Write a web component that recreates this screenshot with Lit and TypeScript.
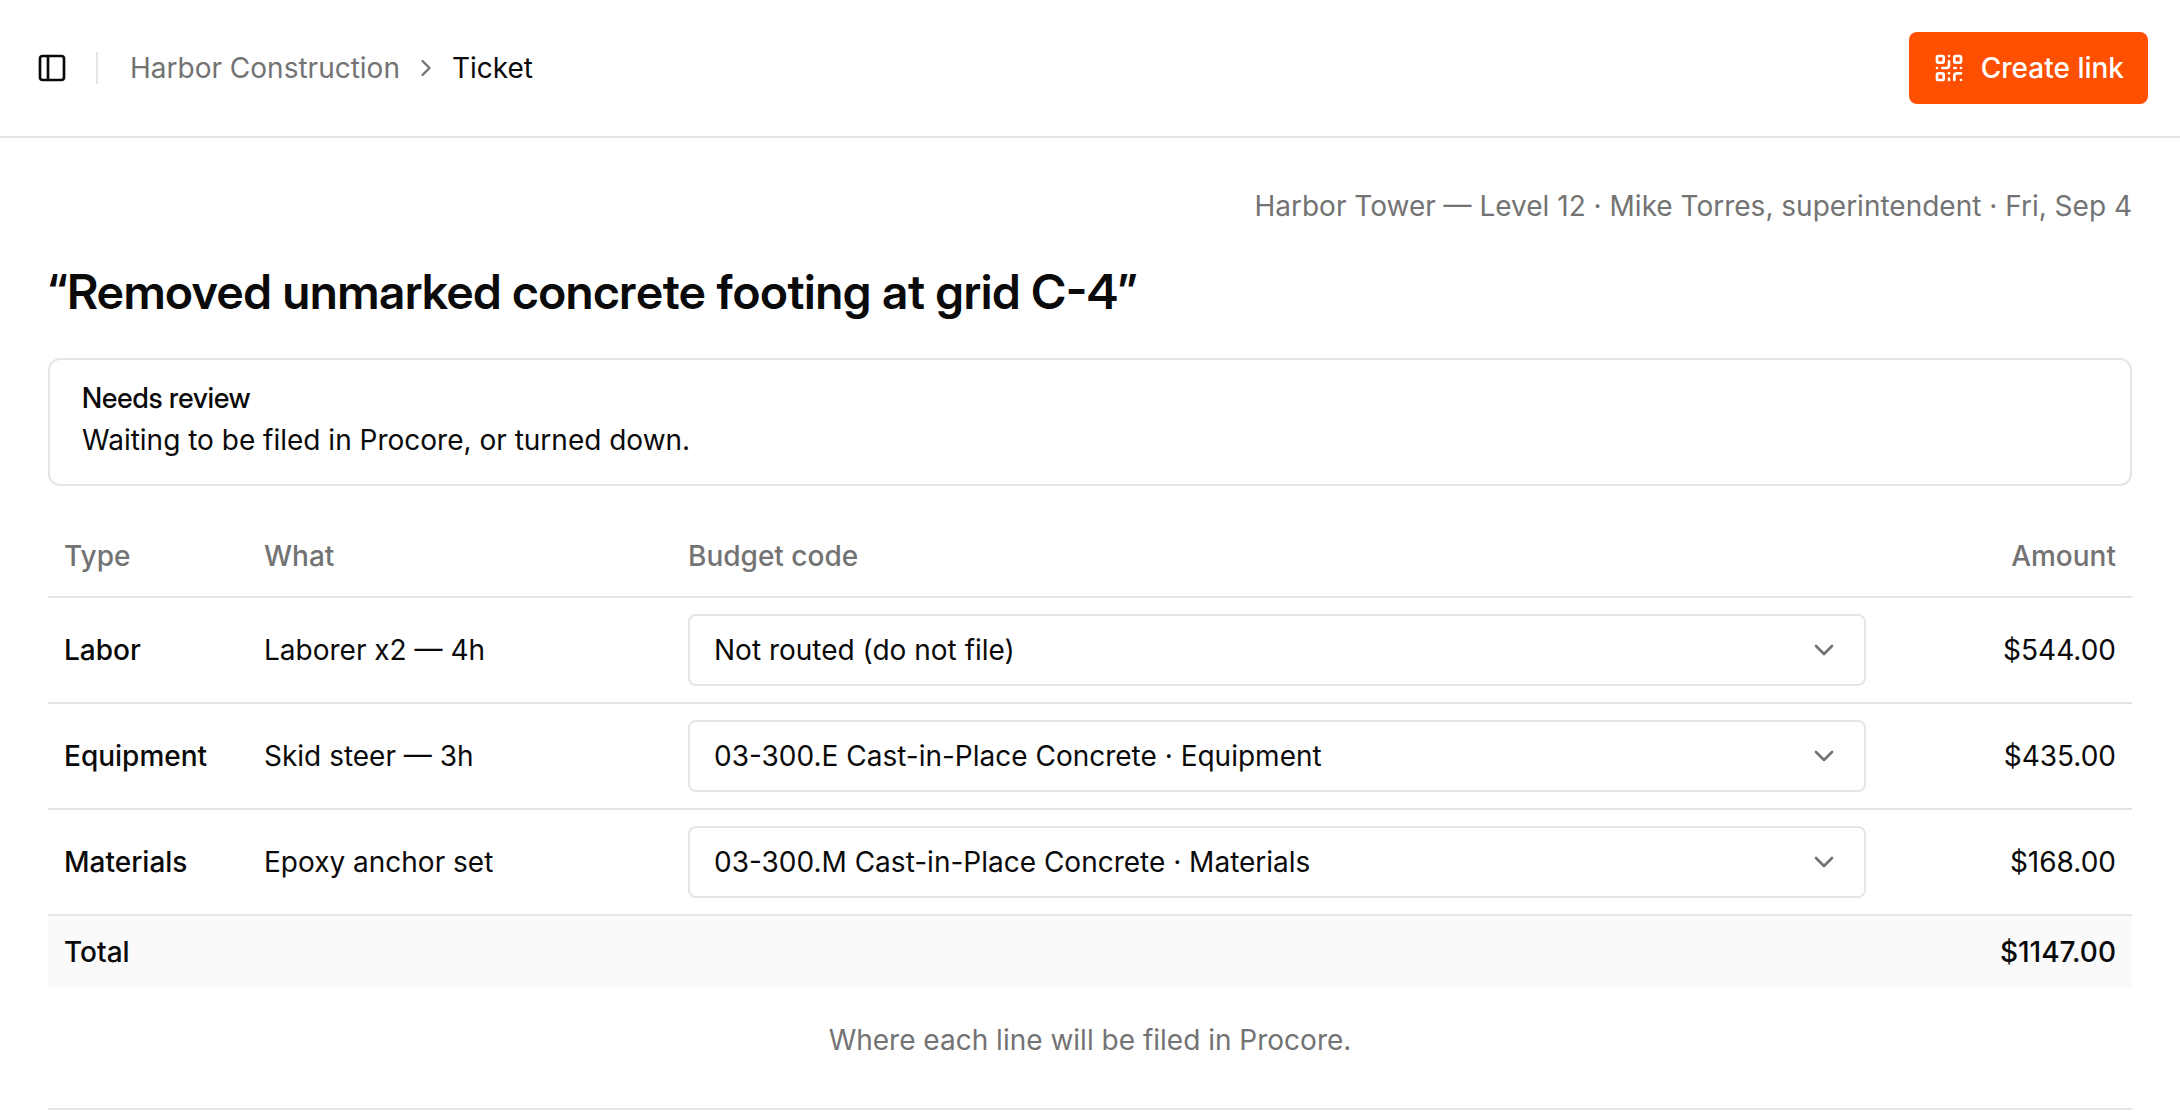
import { LitElement, html, css, svg } from "lit";
import { customElement, state } from "lit/decorators.js";

interface TicketLine {
  type: string;
  what: string;
  code: string;
  cents: number;
}

const CODES = [
  "Not routed (do not file)",
  "03-300.L Cast-in-Place Concrete · Labor",
  "03-300.E Cast-in-Place Concrete · Equipment",
  "03-300.M Cast-in-Place Concrete · Materials",
];

const money = (cents: number) => `$${(cents / 100).toFixed(2)}`;

const panelIcon = svg`<rect width="18" height="18" x="3" y="3" rx="2"></rect><path d="M9 3v18"></path>`;
const chevronRight = svg`<path d="m9 18 6-6-6-6"></path>`;
const chevronDown = svg`<path d="m6 9 6 6 6-6"></path>`;
const qrIcon = svg`
  <rect width="5" height="5" x="3" y="3" rx="1"></rect>
  <rect width="5" height="5" x="16" y="3" rx="1"></rect>
  <rect width="5" height="5" x="3" y="16" rx="1"></rect>
  <path d="M21 16h-3a2 2 0 0 0-2 2v3"></path>
  <path d="M21 21v.01"></path>
  <path d="M12 7v3a2 2 0 0 1-2 2H7"></path>
  <path d="M3 12h.01"></path>
  <path d="M12 3h.01"></path>
  <path d="M12 16v.01"></path>
  <path d="M16 12h1"></path>
  <path d="M21 12v.01"></path>
  <path d="M12 21v-1"></path>`;

@customElement("app-root")
export class AppRoot extends LitElement {
  @state() private lines: TicketLine[] = [
    { type: "Labor", what: "Laborer x2 — 4h", code: CODES[0], cents: 54400 },
    { type: "Equipment", what: "Skid steer — 3h", code: CODES[2], cents: 43500 },
    { type: "Materials", what: "Epoxy anchor set", code: CODES[3], cents: 16800 },
  ];

  static styles = css`
    :host {
      --fg: #0a0a0a;
      --muted: #737373;
      --line: #e5e5e5;
      display: block;
      background: #fff;
      color: var(--fg);
      font: 400 28px/40px Inter, "Liberation Sans", sans-serif;
    }
    * {
      box-sizing: border-box;
    }
    .icon {
      display: block;
      flex: none;
      width: 32px;
      height: 32px;
      fill: none;
      stroke: currentColor;
      stroke-width: 2;
      stroke-linecap: round;
      stroke-linejoin: round;
    }
    .icon.small {
      width: 28px;
      height: 28px;
    }
    button,
    select {
      font: inherit;
      color: inherit;
      cursor: pointer;
    }
    .bar {
      display: flex;
      align-items: center;
      justify-content: space-between;
      padding: 32px;
      border-bottom: 2px solid var(--line);
    }
    .lead {
      display: flex;
      align-items: center;
    }
    .toggle {
      padding: 4px;
      border: 0;
      background: none;
    }
    .divider {
      width: 2px;
      height: 32px;
      margin: 0 32px 0 24px;
      background: var(--line);
    }
    .crumbs {
      display: flex;
      align-items: center;
      gap: 12px;
      margin: 0;
      padding: 0;
      list-style: none;
      color: var(--muted);
    }
    .crumbs a {
      color: inherit;
      text-decoration: none;
    }
    .crumbs li {
      display: flex;
    }
    .crumbs .current {
      color: var(--fg);
    }
    .create {
      display: flex;
      align-items: center;
      gap: 16px;
      height: 72px;
      padding: 0 24px;
      border: 0;
      border-radius: 8px;
      background: #ff4f00;
      color: #fff;
      font-weight: 500;
    }
    .page {
      display: flex;
      flex-direction: column;
      gap: 32px;
      padding: 48px;
    }
    .meta {
      margin: 0;
      text-align: right;
      color: var(--muted);
    }
    .title,
    .notice h2 {
      font-family: "Inter Display", Inter, "Liberation Sans", sans-serif;
    }
    .title {
      margin: 0;
      font-size: 48px;
      line-height: 68px;
      font-weight: 600;
    }
    .notice {
      display: grid;
      gap: 8px;
      padding: 24px 32px;
      border: 2px solid var(--line);
      border-radius: 12px;
    }
    .notice h2 {
      margin: 0;
      font-size: 28px;
      line-height: 28px;
      font-weight: 500;
    }
    .notice p {
      margin: 0;
    }
    .lines {
      width: 100%;
      table-layout: fixed;
      border-collapse: separate;
      border-spacing: 0;
    }
    .lines caption {
      caption-side: bottom;
      padding-top: 32px;
      color: var(--muted);
    }
    .lines th,
    .lines td {
      padding: 16px;
      text-align: left;
      vertical-align: middle;
      font-weight: 400;
    }
    .lines thead th {
      height: 80px;
      padding: 0 16px 2px;
      color: var(--muted);
      font-weight: 500;
    }
    .lines thead th,
    .lines tbody th,
    .lines tbody td {
      border-bottom: 2px solid var(--line);
    }
    .lines tbody th,
    .lines tfoot th,
    .lines tfoot td {
      font-weight: 500;
    }
    .lines tfoot {
      background: #fafafa;
    }
    .lines .amount {
      text-align: right;
    }
    .col-type {
      width: 200px;
    }
    .col-what {
      width: 424px;
    }
    .col-amount {
      width: 250px;
    }
    .picker {
      display: grid;
      align-items: center;
    }
    .picker select,
    .picker .icon {
      grid-area: 1 / 1;
    }
    .picker select {
      appearance: none;
      width: 100%;
      height: 72px;
      margin: 0;
      padding: 0 72px 0 24px;
      border: 2px solid var(--line);
      border-radius: 8px;
      background: #fff;
    }
    .picker .icon {
      justify-self: end;
      margin-right: 26px;
      color: var(--muted);
      pointer-events: none;
    }
    .rule {
      width: 100%;
      height: 2px;
      margin: 16px 0 0;
      border: 0;
      background: var(--line);
    }
  `;

  private route(index: number, event: Event) {
    const code = (event.target as HTMLSelectElement).value;
    this.lines = this.lines.map((line, i) => (i === index ? { ...line, code } : line));
  }

  render() {
    const total = this.lines.reduce((sum, line) => sum + line.cents, 0);
    return html`
      <header class="bar">
        <div class="lead">
          <button class="toggle" type="button" aria-label="Toggle sidebar">
            <svg class="icon" viewBox="0 0 24 24" aria-hidden="true">${panelIcon}</svg>
          </button>
          <span class="divider"></span>
          <nav aria-label="Breadcrumb">
            <ol class="crumbs">
              <li><a href="#">Harbor Construction</a></li>
              <li aria-hidden="true">
                <svg class="icon small" viewBox="0 0 24 24">${chevronRight}</svg>
              </li>
              <li class="current" aria-current="page">Ticket</li>
            </ol>
          </nav>
        </div>
        <button class="create" type="button">
          <svg class="icon" viewBox="0 0 24 24" aria-hidden="true">${qrIcon}</svg>
          Create link
        </button>
      </header>
      <main class="page">
        <p class="meta">Harbor Tower — Level 12 · Mike Torres, superintendent · Fri, Sep 4</p>
        <h1 class="title">“Removed unmarked concrete footing at grid C-4”</h1>
        <section class="notice">
          <h2>Needs review</h2>
          <p>Waiting to be filed in Procore, or turned down.</p>
        </section>
        <table class="lines">
          <caption>Where each line will be filed in Procore.</caption>
          <colgroup>
            <col class="col-type" />
            <col class="col-what" />
            <col />
            <col class="col-amount" />
          </colgroup>
          <thead>
            <tr>
              <th scope="col">Type</th>
              <th scope="col">What</th>
              <th scope="col">Budget code</th>
              <th scope="col" class="amount">Amount</th>
            </tr>
          </thead>
          <tbody>
            ${this.lines.map(
              (line, i) => html`
                <tr>
                  <th scope="row">${line.type}</th>
                  <td>${line.what}</td>
                  <td>
                    <div class="picker">
                      <select
                        aria-label="Budget code for ${line.type}"
                        @change=${(e: Event) => this.route(i, e)}
                      >
                        ${CODES.map(
                          (code) => html`<option ?selected=${code === line.code}>${code}</option>`,
                        )}
                      </select>
                      <svg class="icon" viewBox="0 0 24 24" aria-hidden="true">${chevronDown}</svg>
                    </div>
                  </td>
                  <td class="amount">${money(line.cents)}</td>
                </tr>
              `,
            )}
          </tbody>
          <tfoot>
            <tr>
              <th scope="row" colspan="3">Total</th>
              <td class="amount">${money(total)}</td>
            </tr>
          </tfoot>
        </table>
        <hr class="rule" />
      </main>
    `;
  }
}
